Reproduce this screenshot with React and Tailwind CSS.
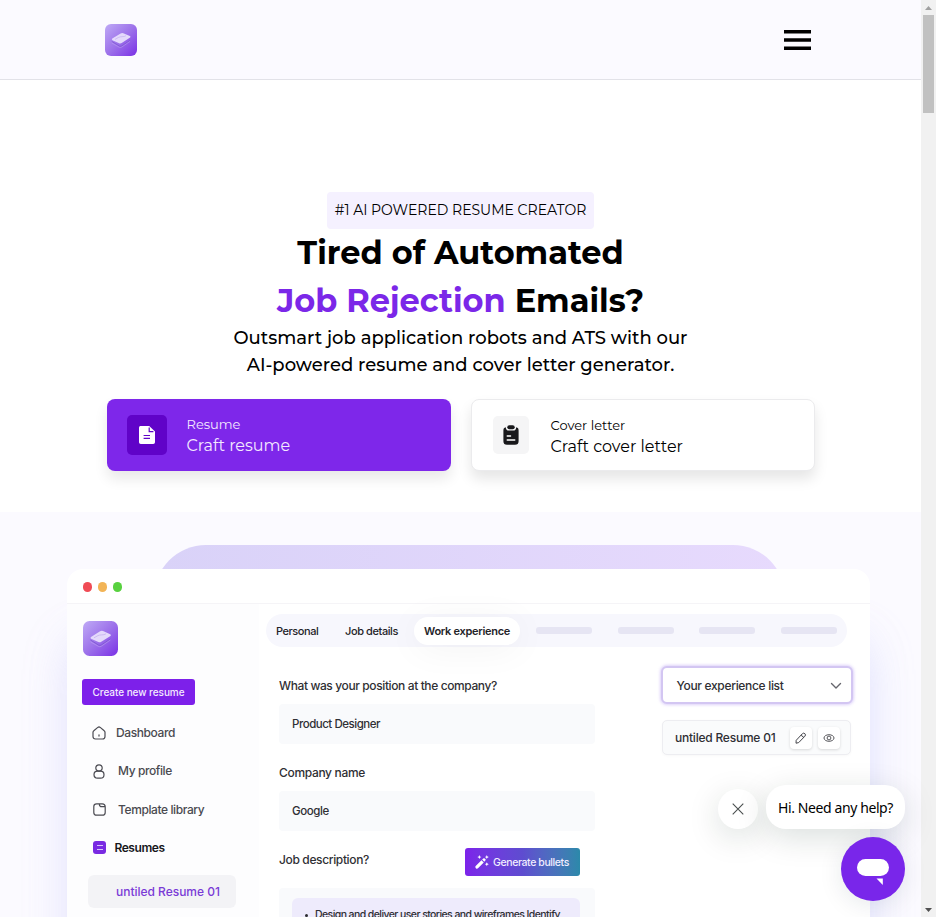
import React from "react";

function LogoMark({ className, id }) {
  return (
    <svg viewBox="0 0 32 32" className={className}>
      <defs>
        <linearGradient id={id} x1="0" y1="0" x2="1" y2="1">
          <stop offset="0" stopColor="#bfaaf6" />
          <stop offset="0.5" stopColor="#9d72ea" />
          <stop offset="1" stopColor="#7a30e6" />
        </linearGradient>
      </defs>
      <rect width="32" height="32" rx="6" fill={`url(#${id})`} />
      <path d="M6.800 17.400l7.600 4.700q1.200.5 2.400-.2l8.400-5.600" fill="none" stroke="#7f58d2" strokeWidth="0.800" />
      <path d="M6.800 19l7.500 4.300q1.100.5 2.200-.1l8.500-5.800" fill="none" stroke="#bfa3f0" strokeWidth="0.500" />
      <path d="M7.300 14.600L15.600 9.400q1.300-.8 2.700-.2l6.600 2.800q1.200.7.200 1.600l-8.400 5.400q-1.300.8-2.600.2l-6.700-3q-1.100-.7-.1-1.600z" fill="#e4d9fb" />
      <path d="M10 15.400l3.600-2q1.400-.7 3.400-.7 2.400.1 4-1" fill="none" stroke="#b79fe8" strokeWidth="0.500" />
    </svg>
  );
}

function Header() {
  return (
    <header className="flex h-20 items-center justify-between border-b border-[#e2e2e8] bg-[#fbfaff] pr-[110.5px] pl-[105px]">
      <LogoMark id="logo-header" className="size-8" />
      <svg viewBox="0 0 27 20" className="mt-px h-5 w-[27px]">
        <path d="M0 0h27v3.400H0zM0 8.300h27v3.400H0zM0 16.600h27V20H0z" fill="#000" />
      </svg>
    </header>
  );
}

function Hero() {
  return (
    <section className="flex h-[432px] flex-col items-center bg-white pt-[112px] text-black">
      <div className="flex h-[37px] w-[267px] items-center justify-center rounded-[4px] bg-[#f5f1ff] text-[14px] whitespace-nowrap">
        #1 AI POWERED RESUME CREATOR
      </div>
      <h1 className="text-center text-[32px] leading-[48px] font-bold whitespace-nowrap">
        <span className="block">Tired of Automated</span>
        <span className="block">
          <span className="text-[#7b27e8]">Job Rejection</span> Emails?
        </span>
      </h1>
      <p className="text-center text-[18px] leading-[27px] font-medium whitespace-nowrap">
        <span className="block">Outsmart job application robots and ATS with our</span>
        <span className="block">AI-powered resume and cover letter generator.</span>
      </p>
      <div className="mt-5 flex gap-5">
        <div className="flex h-[72px] w-[344px] items-center rounded-lg bg-[#7e27ea] pl-5 shadow-[0_8px_14px_rgba(0,0,0,0.09)]">
          <div className="flex size-10 items-center justify-center rounded-[5px] bg-[#6003c8]">
            <svg viewBox="0 0 16 18" className="h-[18px] w-4">
              <path d="M2 0h8.200L16 5.600V16.200a1.800 1.800 0 0 1-1.800 1.800H1.800A1.800 1.800 0 0 1 0 16.200V1.800A1.800 1.800 0 0 1 2 0z" fill="#fff" />
              <path d="M10.200 1.400v4.200h4.200M4.600 9.500h6.400M4.600 12.300h6.400" fill="none" stroke="#6003c8" strokeWidth="1.200" />
            </svg>
          </div>
          <div className="ml-5 pt-px whitespace-nowrap text-[#f4e9ff]">
            <div className="text-[13px] leading-[19px]">Resume</div>
            <div className="text-[16px] leading-[23px]">Craft resume</div>
          </div>
        </div>
        <div className="flex h-[72px] w-[344px] items-center rounded-lg border border-[#ebebed] bg-white pl-[21px] shadow-[0_8px_14px_rgba(0,0,0,0.1)]">
          <div className="flex h-[38px] w-9 items-center justify-center rounded-[5px] bg-[#f5f5f6]">
            <svg viewBox="0 0 16 20" className="h-5 w-4">
              <path d="M2.800 2.200C1 2.500.4 3.700.4 5.500v10.700C.4 18.600 1.600 19.700 4 19.700h8c2.400 0 3.600-1.100 3.600-3.500V5.500c0-1.800-.6-3-2.400-3.300C13.200 4.500 12 5.600 10.300 5.600H5.700C4 5.600 2.800 4.500 2.800 2.200z" fill="#18181b" />
              <rect x="4.300" y="0.300" width="7.400" height="4" rx="2" fill="#18181b" />
              <path d="M4.200 11h3.400M4.200 15h7.600" stroke="#fff" strokeWidth="1.300" strokeLinecap="round" />
            </svg>
          </div>
          <div className="ml-[22px] pt-[3px] whitespace-nowrap">
            <div className="text-[13px] leading-[18px]">Cover letter</div>
            <div className="pt-px text-[16px] leading-[23px]">Craft cover letter</div>
          </div>
        </div>
      </div>
    </section>
  );
}

function HomeIcon() {
  return (
    <svg viewBox="0 0 14 14" className="size-3.5" fill="none" stroke="#4b4b52" strokeWidth="1.200" strokeLinecap="round" strokeLinejoin="round">
      <path d="M1 6.200Q1 5.300 1.800 4.700L5.800 1.400Q7 .5 8.200 1.400l4 3.300Q13 5.300 13 6.200v4.300Q13 13 10.500 13h-7Q1 13 1 10.500zM7 8.800v1.300" />
    </svg>
  );
}

function UserIcon() {
  return (
    <svg viewBox="0 0 12 15" className="h-[15px] w-3" fill="none" stroke="#4b4b52" strokeWidth="1.200">
      <circle cx="6" cy="4" r="3.200" />
      <rect x="1" y="7.200" width="10" height="7" rx="3.500" />
    </svg>
  );
}

function FileIcon() {
  return (
    <svg viewBox="0 0 13 13" className="size-[13px]" fill="none" stroke="#4b4b52" strokeWidth="1.200" strokeLinejoin="round">
      <path d="M3.600.8h5.600Q12.200.8 12.200 3.800v5.600q0 2.800-2.800 2.800H3.600Q.8 12.200.8 9.400V3.600Q.8.8 3.600.8zM6.400 1v.4q0 2.200 2.400 2.200h3.200" />
    </svg>
  );
}

function Sidebar() {
  return (
    <aside className="flex w-[192px] flex-col bg-[#fdfdfe] pt-[17px] pl-[15px] text-[12px] font-medium tracking-[-0.4px] whitespace-nowrap text-[#4a4a50]">
      <LogoMark id="logo-app" className="ml-px size-[35px]" />
      <div className="mt-[23px] flex h-[26px] w-[113px] items-center justify-center rounded-[3px] bg-[#7d20ea] pt-px text-[10px] tracking-[-0.05px] text-[#f4eaff]">
        Create new resume
      </div>
      <div className="mt-[9px] flex h-[38px] items-center">
        <div className="ml-2.5 w-[24px]"><HomeIcon /></div>Dashboard
      </div>
      <div className="flex h-[38px] items-center">
        <div className="ml-[11px] w-[25px]"><UserIcon /></div>My profile
      </div>
      <div className="flex h-[38px] items-center pt-px">
        <div className="ml-[11px] w-[25px]"><FileIcon /></div>Template library
      </div>
      <div className="flex h-[38px] items-center pt-px font-semibold tracking-[-0.45px] text-[#17171b]">
        <div className="ml-[11px] w-[21.5px]">
          <div className="flex size-[13px] flex-col items-center justify-center gap-[3px] rounded-[3px] bg-[#792ae2]">
            <div className="h-px w-[6px] bg-[#d8c3fa]" />
            <div className="h-px w-[6px] bg-[#d8c3fa]" />
          </div>
        </div>
        Resumes
      </div>
      <div className="mt-[9px] ml-[6px] flex h-[33px] w-[148px] items-center rounded-[6px] bg-[#f3f3f6] pl-7 tracking-[-0.02px] text-[#7a3bd6]">
        untiled Resume 01
      </div>
    </aside>
  );
}

function Tabs() {
  return (
    <div className="ml-[7px] flex h-[33px] w-[581px] items-center rounded-full bg-[#f7f7fd] pl-2.5 text-[11px] font-medium whitespace-nowrap text-[#232328]">
      <span className="w-[69px] pt-px tracking-[-0.45px]">Personal</span>
      <span className="w-[69px] pt-px tracking-[-0.41px]">Job details</span>
      <span className="mr-4 flex h-7 w-[106px] items-center justify-center rounded-full bg-white pt-px font-semibold tracking-[-0.29px] shadow-[0_4px_36px_rgba(0,0,0,0.05)]">
        Work experience
      </span>
      <div className="flex gap-[25.5px]">
        <div className="h-[7px] w-14 rounded-[3px] bg-[#e6e5f3]" />
        <div className="h-[7px] w-14 rounded-[3px] bg-[#e6e5f3]" />
        <div className="h-[7px] w-14 rounded-[3px] bg-[#e6e5f3]" />
        <div className="h-[7px] w-14 rounded-[3px] bg-[#e6e5f3]" />
      </div>
    </div>
  );
}

function Form() {
  return (
    <div className="w-[316px] pt-[29px] text-[12px] font-medium whitespace-nowrap text-[#2f2f34]">
      <div className="h-5 leading-5 tracking-[-0.39px]">What was your position at the company?</div>
      <div className="mt-2 flex h-10 items-center rounded-[4px] bg-[#f9fafc] pt-[2px] pl-[13px] text-[11.5px] tracking-[-0.475px]">Product Designer</div>
      <div className="mt-[19px] h-5 leading-5 tracking-[-0.33px]">Company name</div>
      <div className="mt-2 flex h-10 items-center rounded-[4px] bg-[#f9fafc] pt-[2px] pl-[13px] text-[11.5px] tracking-[-0.38px]">Google</div>
      <div className="mt-[17px] flex h-7 w-[301px] items-center justify-between">
        <span className="pb-[4px] tracking-[-0.36px]">Job description?</span>
        <div className="flex h-7 w-[115px] items-center rounded-[3px] bg-linear-to-r from-[#7c22ea] via-[#5e4cd0] to-[#2b89aa] pl-[10px] text-[10.5px] tracking-[-0.4px] text-[#f1edff]">
          <svg viewBox="0 0 16 16" className="mr-1 size-3.5" fill="#fff">
            <path d="M.8 12.600L7.400 6l2.600 2.600L3.400 15.200q-1.200.9-2.400-.2t-.2-2.400zM8.200 5.200l1.200-1.200q1.100-.9 2.200.2t.2 2.200l-1.200 1.200z" />
            <path d="M5 0l.7 1.600 1.600.7-1.600.7L5 4.600 4.300 3l-1.600-.7 1.600-.7zM13.500 0l.7 1.600 1.600.7-1.600.7-.7 1.600-.7-1.600-1.600-.7 1.600-.7zM13.500 8.200l.7 1.600 1.600.7-1.600.7-.7 1.600-.7-1.600-1.600-.7 1.600-.7z" />
          </svg>
          <span className="pt-[2px]">Generate bullets</span>
        </div>
      </div>
      <div className="mt-3 h-20 rounded-[4px] bg-[#f9fafc] pt-[10px] pr-[15px] pl-[13px]">
        <div className="flex h-20 rounded-[6px] bg-[#eeebfc] pt-[7px] pl-[13px] text-[10.5px] leading-5">
          <span className="mt-[9px] mr-[7px] size-[3px] rounded-full bg-[#2a2a2f]" />
          <span className="tracking-[-0.58px]">Design and deliver user stories and wireframes Identify</span>
        </div>
      </div>
    </div>
  );
}

function Experience() {
  return (
    <div className="ml-[66px] w-[192px] pt-[19px] text-[12px] font-medium whitespace-nowrap text-[#2f2f34]">
      <div className="flex h-[38px] items-center justify-between rounded-[6px] border-2 border-[#d3c6f2] bg-white pt-px pr-[9px] pl-[13.5px] shadow-[0_0_3px_1px_rgba(170,140,240,0.4)]">
        <span className="pt-px tracking-[-0.32px]">Your experience list</span>
        <svg viewBox="0 0 12 8" className="h-2 w-3" fill="none" stroke="#66666d" strokeWidth="1.400" strokeLinecap="round" strokeLinejoin="round">
          <path d="M1.500 1.500L6 6l4.500-4.500" />
        </svg>
      </div>
      <div className="mt-4 ml-px flex h-[35px] w-[189px] items-center rounded-[5px] border border-[#ededf1] bg-[#fafbfc] pl-3 shadow-[0_1px_3px_rgba(0,0,0,0.03)]">
        <span className="w-[115px] pt-px tracking-[-0.22px]">untiled Resume 01</span>
        <div className="flex size-[22px] items-center justify-center rounded-[4px] bg-white shadow-[0_1px_3px_rgba(0,0,0,0.14)]">
          <svg viewBox="0 0 12 12" className="size-3" fill="none" stroke="#44444a" strokeWidth="1" strokeLinejoin="round">
            <path d="M1.200 8.300L7.400 1.700q1.300-1.200 2.500 0t0 2.500L3.700 10.600 1 11.200zM6.400 2.900q.4 1.900 2.400 2.300" />
          </svg>
        </div>
        <div className="ml-1.5 flex size-[22px] items-center justify-center rounded-[4px] bg-white shadow-[0_1px_3px_rgba(0,0,0,0.14)]">
          <svg viewBox="0 0 12 10" className="h-[10px] w-3" fill="none" stroke="#44444a" strokeWidth="0.900">
            <ellipse cx="6" cy="5" rx="5" ry="3.300" />
            <circle cx="6" cy="5" r="1.900" />
          </svg>
        </div>
      </div>
    </div>
  );
}

function AppPreview() {
  return (
    <section className="h-[405px] overflow-hidden bg-[#fbfaff] pt-[33px]">
      <div className="ml-[154px] h-6 w-[631px] overflow-hidden">
        <div className="h-[104px] rounded-[52px] bg-linear-to-r from-[#d9d2f8] to-[#e7dafd]" />
      </div>
      <div className="ml-[67px] h-[600px] w-[803px] rounded-[16px] bg-white font-[Inter,sans-serif] shadow-[-4px_66px_50px_-10px_rgba(200,188,240,0.26),4px_66px_50px_-10px_rgba(170,188,255,0.32)]">
        <div className="flex h-[35px] items-center gap-[5.5px] border-b border-[#f5f4f7] pt-[2px] pl-[15.5px]">
          <div className="size-[9.5px] rounded-full bg-[#f04b55]" />
          <div className="size-[9.5px] rounded-full bg-[#f2b456]" />
          <div className="size-[9.5px] rounded-full bg-[#58d13f]" />
        </div>
        <div className="flex h-[560px]">
          <Sidebar />
          <div className="pt-2.5">
            <Tabs />
            <div className="ml-5 flex">
              <Form />
              <Experience />
            </div>
          </div>
        </div>
      </div>
    </section>
  );
}

function ChatWidget() {
  return (
    <div className="absolute right-[31px] bottom-4 flex flex-col items-end gap-2">
      <div className="flex items-end gap-2">
        <div className="flex size-10 items-center justify-center rounded-full bg-white shadow-[0_8px_32px_rgba(0,40,30,0.15)]">
          <svg viewBox="0 0 12 12" className="size-3" stroke="#4a4f4f" strokeWidth="1.100">
            <path d="M.7.7l10.600 10.600M11.300.7L.7 11.300" />
          </svg>
        </div>
        <div className="flex h-11 w-[139px] items-center rounded-[20px] bg-white pl-3 font-['Noto_Sans',sans-serif] text-[14px] tracking-[-0.4px] whitespace-nowrap text-black shadow-[0_8px_32px_rgba(0,40,30,0.15)]">
          Hi. Need any help?
        </div>
      </div>
      <div className="flex size-16 items-center justify-center rounded-full bg-[#7926ea] shadow-[0_4px_24px_rgba(0,40,60,0.1)]">
        <svg viewBox="0 0 32 28" className="mt-[8px] h-7 w-8" fill="#fff">
          <rect y="0" width="32" height="17" rx="8.500" />
          <path d="M19.500 19.500h6.300v6.500z" />
        </svg>
      </div>
    </div>
  );
}

function Scrollbar() {
  return (
    <div className="flex w-[15px] flex-col items-center justify-between bg-[#f1f1f1]">
      <div className="flex flex-col items-center">
        <svg viewBox="0 0 15 15" className="size-[15px]" fill="#a0a0a0"><path d="M4 10l3.500-4L11 10z" /></svg>
        <div className="h-[98px] w-[11px] bg-[#c1c1c1]" />
      </div>
      <svg viewBox="0 0 15 15" className="size-[15px]" fill="#505050"><path d="M4 6h7l-3.500 4z" /></svg>
    </div>
  );
}

export default function App() {
  return (
    <div className="relative flex h-[917px] w-[936px] overflow-hidden bg-white font-[Montserrat,Inter,sans-serif]">
      <main className="w-[921px] overflow-hidden">
        <Header />
        <Hero />
        <AppPreview />
      </main>
      <Scrollbar />
      <ChatWidget />
    </div>
  );
}
